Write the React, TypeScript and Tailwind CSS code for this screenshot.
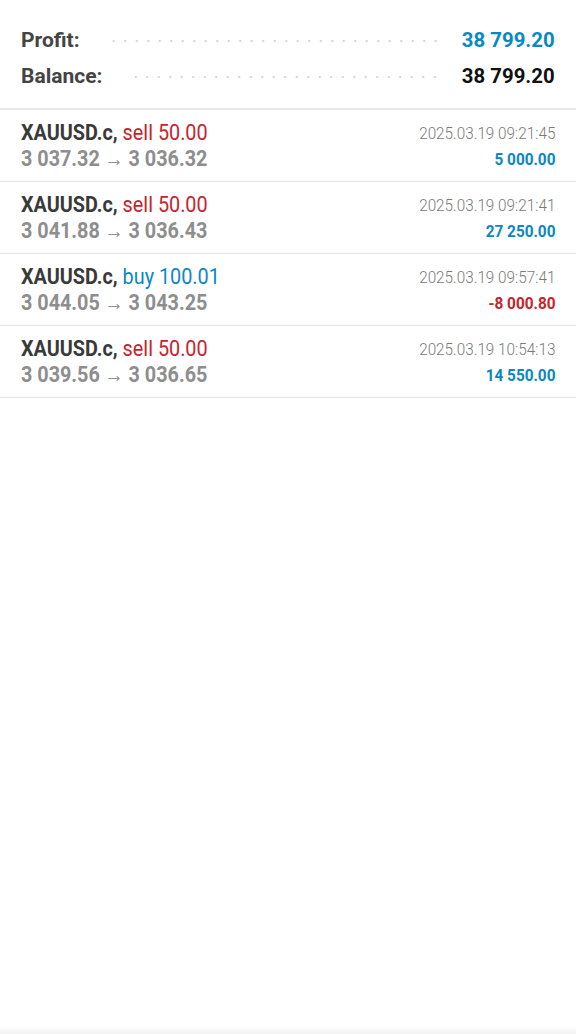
import React from 'react';

type Deal = {
  symbol: string;
  side: 'buy' | 'sell';
  volume: string;
  open: string;
  close: string;
  time: string;
  profit: string;
};

const deals: Deal[] = [
  { symbol: 'XAUUSD.c', side: 'sell', volume: '50.00', open: '3 037.32', close: '3 036.32', time: '2025.03.19 09:21:45', profit: '5 000.00' },
  { symbol: 'XAUUSD.c', side: 'sell', volume: '50.00', open: '3 041.88', close: '3 036.43', time: '2025.03.19 09:21:41', profit: '27 250.00' },
  { symbol: 'XAUUSD.c', side: 'buy', volume: '100.01', open: '3 044.05', close: '3 043.25', time: '2025.03.19 09:57:41', profit: '-8 000.80' },
  { symbol: 'XAUUSD.c', side: 'sell', volume: '50.00', open: '3 039.56', close: '3 036.65', time: '2025.03.19 10:54:13', profit: '14 550.00' },
];

const font = { fontFamily: 'Roboto, "Liberation Sans", sans-serif' };

const Leader = () => (
  <div className="flex-1 h-[4px] ml-[28px] mr-[20px] bg-[radial-gradient(circle,#d6d6d6_1px,transparent_1.6px)] bg-[length:11.5px_4px] bg-repeat-x" />
);

const App: React.FC = () => {
  return (
    <div className="w-[576px] h-[1034px] bg-white flex flex-col" style={font}>
      {/* summary */}
      <div className="px-[21px] pt-[23px] pb-[13px] border-b-2 border-[#e9e9e9]">
        <div className="flex items-center h-[36px]">
          <span className="text-[21px] font-bold text-[#444]">Profit:</span>
          <Leader />
          <span className="text-[21px] font-bold text-[#0a88c2] inline-block scale-x-[0.97] origin-right">38 799.20</span>
        </div>
        <div className="flex items-center h-[36px]">
          <span className="text-[21px] font-bold text-[#444]">Balance:</span>
          <Leader />
          <span className="text-[21px] font-bold text-[#111] inline-block scale-x-[0.97] origin-right">38 799.20</span>
        </div>
      </div>

      {/* deals */}
      {deals.map((d, i) => (
        <div key={i} className="h-[72px] flex items-center justify-between px-[21px] border-b border-[#e3e3e3]">
          <div className="flex flex-col origin-left scale-x-[0.9]">
            <div className="text-[22px] leading-[26px] whitespace-nowrap">
              <span className="font-bold text-[#3a3a3a]">{d.symbol},</span>{' '}
              <span className={d.side === 'sell' ? 'text-[#c8232c]' : 'text-[#0a88c2]'}>
                {d.side} {d.volume}
              </span>
            </div>
            <div className="text-[22px] leading-[26px] font-bold text-[#8e8e8e] whitespace-nowrap">
              {d.open} <span className="font-normal text-[21px] leading-[20px]">→</span> {d.close}
            </div>
          </div>
          <div className="flex flex-col items-end origin-right scale-x-[0.9]">
            <div className="text-[17px] leading-[26px] font-light text-[#7a7a7a] whitespace-nowrap">{d.time}</div>
            <div
              className={
                'text-[17px] leading-[26px] font-bold whitespace-nowrap ' +
                (d.profit.startsWith('-') ? 'text-[#c8232c]' : 'text-[#0a88c2]')
              }
            >
              {d.profit}
            </div>
          </div>
        </div>
      ))}

      <div className="flex-1" />
      <div className="h-[8px] bg-gradient-to-b from-white to-[#f2f2f2]" />
    </div>
  );
};

export default App;
